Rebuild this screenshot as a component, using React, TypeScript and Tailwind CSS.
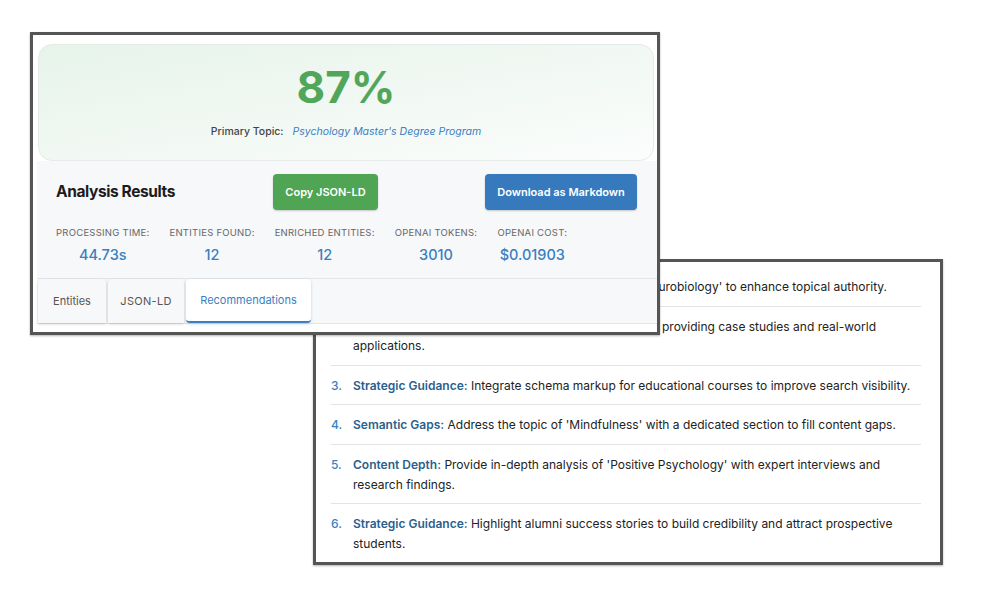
import React from "react";

const stats = [
  { label: "Processing Time:", value: "44.73s" },
  { label: "Entities Found:", value: "12" },
  { label: "Enriched Entities:", value: "12" },
  { label: "OpenAI Tokens:", value: "3010" },
  { label: "OpenAI Cost:", value: "$0.01903" },
];

const recs = [
  {
    n: "1.",
    label: "Semantic Gaps:",
    text: "Add more coverage for 'Cognitive Neurobiology' to enhance topical authority.",
  },
  {
    n: "2.",
    label: "Content Depth:",
    text: "Enrich the coverage of key themes by providing case studies and real-world applications.",
  },
  {
    n: "3.",
    label: "Strategic Guidance:",
    text: "Integrate schema markup for educational courses to improve search visibility.",
  },
  {
    n: "4.",
    label: "Semantic Gaps:",
    text: "Address the topic of 'Mindfulness' with a dedicated section to fill content gaps.",
  },
  {
    n: "5.",
    label: "Content Depth:",
    text: "Provide in-depth analysis of 'Positive Psychology' with expert interviews and research findings.",
  },
  {
    n: "6.",
    label: "Strategic Guidance:",
    text: "Highlight alumni success stories to build credibility and attract prospective students.",
  },
];

export default function App() {
  return (
    <div
      className="relative w-[988px] h-[610px] bg-white overflow-hidden"
      style={{ fontFamily: "Inter, 'Noto Sans', sans-serif" }}
    >
      {/* Back frame: recommendations list */}
      <div className="absolute left-[313px] top-[259px] w-[630px] h-[306px] border-[3px] border-[#555555] bg-white shadow-[0_1px_2px_rgba(0,0,0,0.3)]">
        <ul className="pl-[15px] pr-[19px] pt-[5px]">
          {recs.map((r, i) => (
            <li
              key={i}
              className={`flex pt-[10px] pb-[9px] text-[12px] leading-[19.6px] text-[#222222] ${
                i < recs.length - 1 ? "border-b border-[#e3e3e3]" : ""
              }`}
            >
              <span className="w-[22px] shrink-0 text-[#3a7fc1] font-medium">{r.n}</span>
              <span className="flex-1">
                <span className="font-semibold text-[#2b5f8e]">{r.label}</span> {r.text}
              </span>
            </li>
          ))}
        </ul>
      </div>

      {/* Front frame: analysis results */}
      <div className="absolute left-[30px] top-[32px] w-[630px] h-[303px] border-[3px] border-[#555555] bg-white shadow-[0_1px_2px_rgba(0,0,0,0.3)] overflow-hidden">
        <div className="pl-[5px] pr-[3px] pt-[9px]">
          <div className="h-[117px] rounded-[14px] border border-[#e6ebe8] bg-gradient-to-br from-[#e6f4ea] via-[#f1f8f3] to-[#fbfdfc] flex flex-col items-center">
            <div className="mt-[16px] text-[44px] leading-[52px] font-bold text-[#52a65a]">87%</div>
            <div className="mt-[11px] flex items-center gap-[9px] text-[10.5px]">
              <span className="font-medium text-[#444444]">Primary Topic:</span>
              <span className="italic text-[#3a80c3]">Psychology Master's Degree Program</span>
            </div>
          </div>
        </div>
        <div className="ml-[4px] bg-[#f7f8fa]">
          <div className="flex items-center pl-[19px] pr-[20px] pt-[13px]">
            <div className="w-[217px] text-[15.5px] font-bold tracking-[-0.4px] text-[#1c1c1c]">Analysis Results</div>
            <button className="w-[105px] h-[36px] rounded-[4px] bg-[#4fa553] text-white text-[11px] font-semibold shadow-[0_1px_2px_rgba(0,0,0,0.2)]">
              Copy JSON-LD
            </button>
            <button className="ml-auto w-[152px] h-[36px] rounded-[4px] bg-[#367abd] text-white text-[11px] font-semibold shadow-[0_1px_2px_rgba(0,0,0,0.2)]">
              Download as Markdown
            </button>
          </div>
          <div className="flex gap-[20px] pl-[19px] pt-[16px] pb-[13px] border-b border-[#e4e6ea]">
            {stats.map((s) => (
              <div key={s.label} className="flex flex-col items-center">
                <div className="text-[9.5px] leading-[14px] uppercase tracking-[0.25px] text-[#666666]">{s.label}</div>
                <div className="mt-[5px] text-[14.5px] leading-[20px] font-medium text-[#3a7fc1]">{s.value}</div>
              </div>
            ))}
          </div>
          <div className="flex gap-[2px] pl-[1px] border-b border-[#e4e6ea]">
            <div className="w-[68px] h-[44px] flex items-center justify-center rounded-t-[4px] bg-[#f7f8fa] shadow-[0_1px_3px_rgba(0,0,0,0.18)] text-[11px] text-[#555555]">
              Entities
            </div>
            <div className="w-[76px] h-[44px] flex items-center justify-center rounded-t-[4px] bg-[#f7f8fa] shadow-[0_1px_3px_rgba(0,0,0,0.18)] text-[11px] text-[#555555] tracking-[0.3px]">
              JSON-LD
            </div>
            <div className="w-[125px] h-[44px] flex items-center justify-center rounded-[4px] bg-white border-b-2 border-[#3a7fc1] shadow-[0_1px_3px_rgba(0,0,0,0.18)] text-[11px] text-[#3a7fc1]">
              Recommendations
            </div>
          </div>
        </div>
      </div>
    </div>
  );
}
